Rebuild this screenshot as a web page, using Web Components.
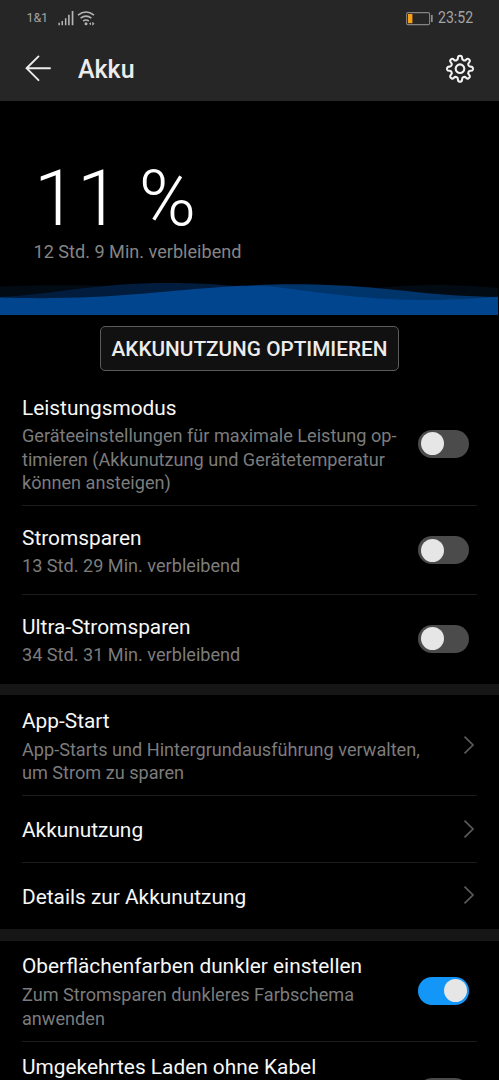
<!DOCTYPE html>
<html lang="de">
<head>
<meta charset="utf-8">
<title>Akku</title>
<style>
html,body{margin:0;background:#000;height:1080px;overflow:hidden}
body{font-family:Roboto,"Noto Sans",sans-serif;color:#f5f5f5}
</style>
</head>
<body>
<battery-screen></battery-screen>
<script>
const define=(name,html,setup)=>customElements.define(name,class extends HTMLElement{
  constructor(){super();const t=document.createElement('template');t.innerHTML=html;
    this.attachShadow({mode:'open'}).append(t.content.cloneNode(true));}
  connectedCallback(){if(setup)setup(this,this.shadowRoot);}
});

define('status-bar',`<style>
:host{display:flex;height:36px;box-sizing:border-box;padding:0 24px 0 26.5px;align-items:center;color:#a3a3a3}
.carrier{font-size:12.5px;line-height:16px;width:31.5px;letter-spacing:-.1px}
.time{margin-left:4px;font-size:16px;line-height:20px;width:37.5px;white-space:nowrap}
.time span{display:block;transform:scaleX(.88);transform-origin:0 50%}
svg{display:block;flex:none}.sp{flex:1}
</style>
<span class="carrier">1&amp;1</span>
<svg width="38" height="18" viewBox="58 8 38 18" fill="#b5b5b5">
<path d="M58.4 21.8h1.5v2.5h-1.5zM61.5 20h1.5v4.3h-1.5zM64.9 17.2h1.5v7.1h-1.5zM68.1 13.7h1.6v10.6h-1.6zM71.7 10h1.7v14.3h-1.7z"/>
<g fill="none" stroke="#b5b5b5" stroke-width="1.6"><path d="M78 14.2q8-6.4 16 0M80.6 17.2q5.4-4.2 10.8 0M83.2 20q2.8-2 5.6 0"/></g>
<circle cx="86" cy="22.7" r="1.5"/><path d="M91 21.2v3l-2-1.5zM92.3 20.7l2.2 2-2.2 2z"/></svg>
<span class="sp"></span>
<svg width="28" height="18" viewBox="406 8 28 18"><rect x="406.6" y="11.6" width="23" height="12" rx="1.4" fill="none" stroke="#858585" stroke-width="1.1"/><path d="M408 13h4.4v9.2H408z" fill="#f9a01b"/><path d="M431 14h1.7v7H431z" fill="#8d8d8d"/></svg>
<span class="time"><span>23:52</span></span>`);

define('title-bar',`<style>
:host{display:flex;height:65px;box-sizing:border-box;padding:0 24px 0 25px;align-items:center;color:#ececec}
svg{display:block;flex:none}
h1{margin:2px 0 0 27px;font-size:25px;line-height:30px;font-weight:500;flex:1}
</style>
<svg width="26" height="28" viewBox="0 0 26 28" fill="none" stroke="#ececec" stroke-width="1.9" stroke-linecap="round" stroke-linejoin="round"><path d="M25 13.2H1.5M13.5 1.4 1.5 13.2l12 12"/></svg>
<h1><slot></slot></h1>
<svg class="gear" width="30" height="30" viewBox="-15 -14.7 30 30" fill="none" stroke="#f2f2f2" stroke-width="2.1" stroke-linejoin="round"><circle r="4.3"/><path/></svg>`,(h,r)=>{
  // eight rounded teeth, four quadratic curves per tooth
  const p=(rad,deg)=>{const a=deg*Math.PI/180;return (rad*Math.cos(a)).toFixed(2)+' '+(rad*Math.sin(a)).toFixed(2)};
  let d='M'+p(12.8,-5);
  for(let i=0;i<8;i++){const a=i*45;
    d+=`Q${p(13.2,a)} ${p(12.8,a+5)}Q${p(12.5,a+9.5)} ${p(10.9,a+11)}Q${p(9.1,a+13)} ${p(9.1,a+22.5)}Q${p(9.1,a+32)} ${p(10.9,a+34)}Q${p(12.5,a+35.5)} ${p(12.8,a+40)}`;}
  r.querySelector('.gear path').setAttribute('d',d+'Z');
});

define('charge-level',`<style>
:host{display:flex;flex-direction:column;height:214px;background:#000}
.level{padding:54px 0 0 34px;font-weight:300;font-size:77.5px;line-height:88px;color:#fff;white-space:pre;height:87px}
.remaining{padding:0 0 0 33.5px;font-size:18.1px;line-height:20px;color:#858585;height:20px}
svg{display:block;margin-top:auto}
</style>
<div class="level"><slot name="level"></slot></div>
<div class="remaining"><slot></slot></div>
<svg width="499" height="45" viewBox="0 270 499 45">
<path d="M0 286.5C60 284 130 284 240 295C330 292 400 284.5 440 285C470 285.5 490 287 498 288V315H0Z" fill="#020a13"/>
<path d="M0 297C60 294 90 283 170 283C220 283 240 287 270 290V315H0Z" fill="#011c3c"/>
<path d="M225 288C260 283.500 300 283.500 340 285.500C400 288.500 430 296 498 297V315H225Z" fill="#00356b"/>
<path d="M0 297.500C100 300.500 150 292 215 287.500C240 285 260 285 280 287.500C330 294 370 300 430 300C460 300 480 297.500 498 297V315H0Z" fill="#00458d"/></svg>`);

define('outline-button',`<style>
:host{display:flex;justify-content:center;padding-top:11px;height:55.5px;box-sizing:border-box}
button{font:500 20.75px/24px Roboto,sans-serif;width:299px;height:44.5px;padding:1px 0 0;border:1.3px solid #5c5c5c;border-radius:5px;background:#111;color:#ececec;white-space:nowrap}
</style><button><slot></slot></button>`);

define('toggle-switch',`<style>
:host{display:block;flex:none;width:51px;height:28px;border-radius:14px;background:#4b4b4b;box-sizing:border-box;padding:2.5px}
i{display:block;width:23px;height:23px;border-radius:50%;background:#e6e6e6}
:host([on]){background:#1297f8}
:host([on]) i{margin-left:auto}
</style><i></i>`);

define('chevron-icon',`<style>:host,svg{display:block;flex:none}</style>
<svg width="12" height="20" viewBox="0 0 12 20" fill="none" stroke="#5a5a5a" stroke-width="1.7"><path d="M1.500 1.700 10 10l-8.500 8.300"/></svg>`);

define('setting-row',`<style>
:host{display:block;padding:0 22px}
.row{display:flex;align-items:center;justify-content:space-between;height:var(--h);box-sizing:border-box;border-bottom:1px solid #1b1b1b;padding-right:8px}
:host([nav]) .row{padding-right:2.5px}
:host([last]) .row{border-bottom-color:transparent}
.text{padding-top:3px;white-space:nowrap}
.title{font-size:20.85px;line-height:24px;color:#f7f7f7;margin:var(--title-shift,0px) 0 calc(-1 * var(--title-shift,0px))}
.desc{font-size:18.13px;line-height:23.5px;color:#7c7c7c;padding-top:5px}
.desc[hidden]{display:none}
</style>
<div class="row"><div class="text"><div class="title"><slot name="title"></slot></div><div class="desc"><slot></slot></div></div><slot name="end"></slot></div>`,(h,r)=>{
  h.style.setProperty('--h',h.getAttribute('height')+'px');
  r.querySelector('.desc').hidden=h.hasAttribute('plain');
});

define('section-gap',`<style>:host{display:block;height:11.5px;background:#161616}</style>`);

define('battery-screen',`<style>
:host{display:block;width:499px;height:1080px;overflow:hidden;background:#000}
header{background:#262626;height:101px}
main{display:block}
.modes{padding-top:11.5px;--title-shift:.8px}
</style>
<header><status-bar></status-bar><title-bar>Akku</title-bar></header>
<main>
<charge-level><span slot="level">11 %</span>12 Std. 9 Min. verbleibend</charge-level>
<outline-button>AKKUNUTZUNG OPTIMIEREN</outline-button>
<div class="modes">
<setting-row height="124"><span slot="title">Leistungsmodus</span>Geräteeinstellungen für maximale Leistung op-<br>timieren (Akkunutzung und Gerätetemperatur<br>können ansteigen)<toggle-switch slot="end"></toggle-switch></setting-row>
<setting-row height="89"><span slot="title">Stromsparen</span>13 Std. 29 Min. verbleibend<toggle-switch slot="end"></toggle-switch></setting-row>
<setting-row height="88.5" last><span slot="title">Ultra-Stromsparen</span>34 Std. 31 Min. verbleibend<toggle-switch slot="end"></toggle-switch></setting-row>
</div>
<section-gap></section-gap>
<div>
<setting-row height="101" nav><span slot="title">App-Start</span>App-Starts und Hintergrundausführung verwalten,<br>um Strom zu sparen<chevron-icon slot="end"></chevron-icon></setting-row>
<setting-row height="66.5" nav plain><span slot="title">Akkunutzung</span><chevron-icon slot="end"></chevron-icon></setting-row>
<setting-row height="66.5" nav plain last><span slot="title">Details zur Akkunutzung</span><chevron-icon slot="end"></chevron-icon></setting-row>
</div>
<section-gap></section-gap>
<div>
<setting-row height="101"><span slot="title">Oberflächenfarben dunkler einstellen</span>Zum Stromsparen dunkleres Farbschema<br>anwenden<toggle-switch slot="end" on></toggle-switch></setting-row>
<setting-row height="101"><span slot="title">Umgekehrtes Laden ohne Kabel</span><br><br><toggle-switch slot="end"></toggle-switch></setting-row>
</div>
</main>`);
</script>
</body>
</html>
